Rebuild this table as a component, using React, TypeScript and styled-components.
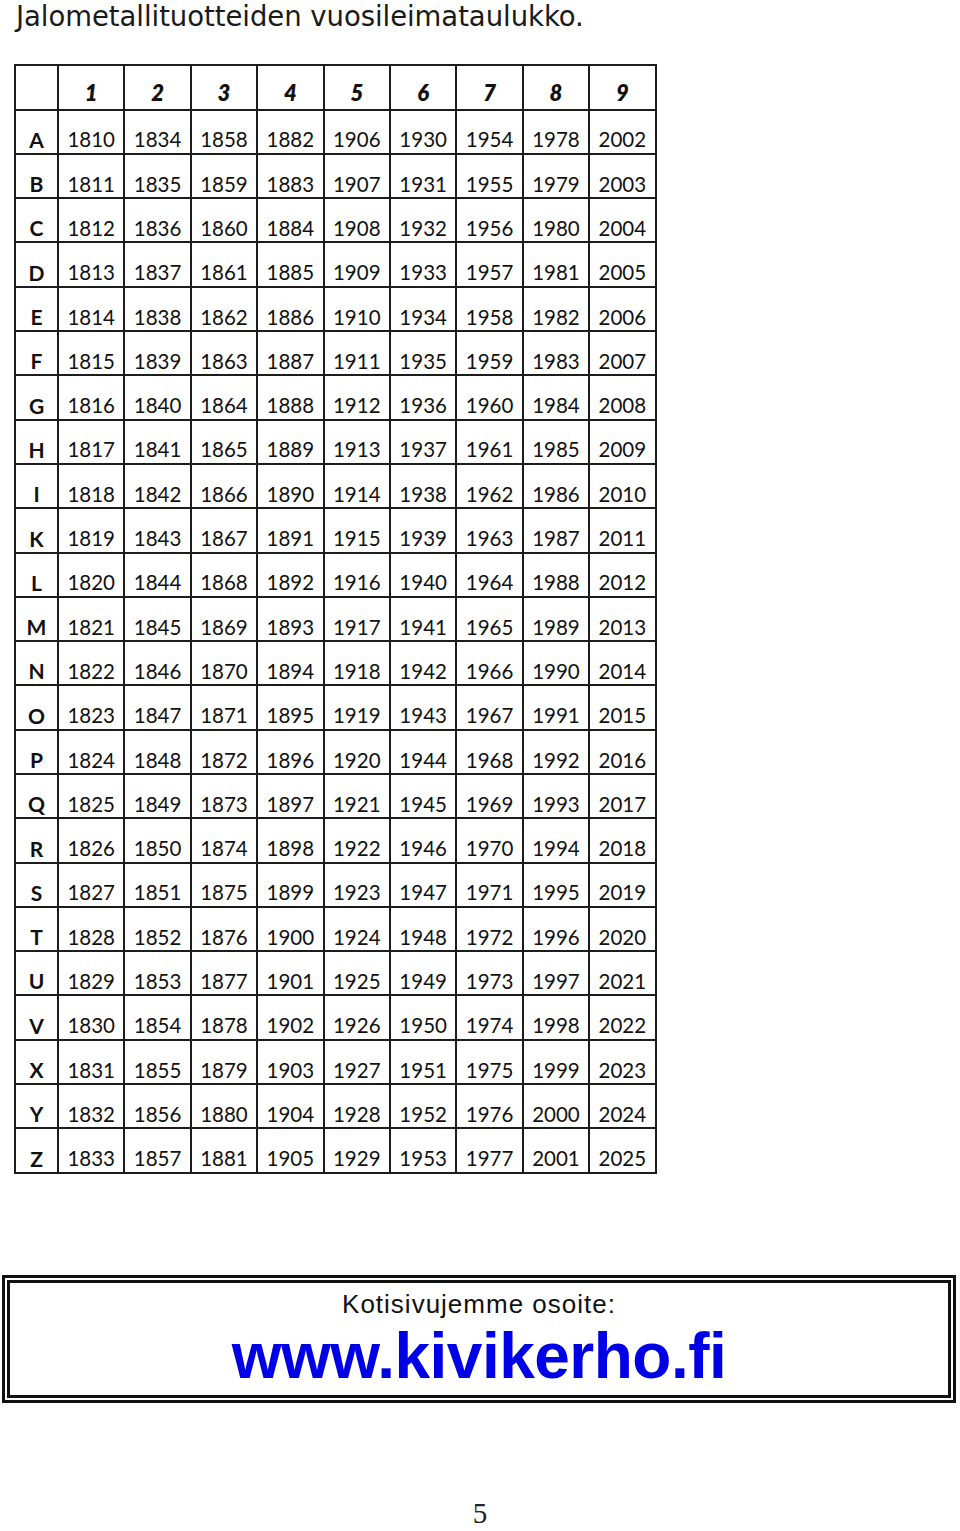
import React from "react";
import styled, { createGlobalStyle } from "styled-components";

const GlobalStyle = createGlobalStyle`
  html, body {
    margin: 0;
    padding: 0;
    background: #ffffff;
  }
  body {
    width: 960px;
    color: #151515;
  }
`;

const Page = styled.div`
  display: flex;
  flex-direction: column;
  width: 960px;
  height: 1531px;
`;

const Title = styled.h1`
  margin: 0;
  padding: 1px 0 0 16px;
  font-family: "DejaVu Sans", Verdana, sans-serif;
  font-weight: normal;
  font-size: 27.5px;
  letter-spacing: -0.05px;
  line-height: 1.1;
  color: #1a1a1a;
`;

const YearTable = styled.table`
  margin: 33px 0 0 14px;
  border-collapse: collapse;
  table-layout: fixed;
  width: 641px;
  border: 2px solid #1c1c1c;
  font-family: Lato, "Open Sans", sans-serif;
  font-size: 20.5px;
  color: #111;
`;

const Row = styled.tr`
  height: 44.3px;
`;

const Cell = styled.td<{ $head?: boolean }>`
  border: 2px solid #1c1c1c;
  padding: 0 0 ${(p) => (p.$head ? "5px" : "3px")};
  text-align: center;
  vertical-align: bottom;
  line-height: 1;
  font-size: ${(p) => (p.$head ? "22px" : "inherit")};
  font-weight: ${(p) => (p.$head ? 800 : 400)};
  font-style: ${(p) => (p.$head ? "italic" : "normal")};
`;

const LetterCol = styled.col`
  width: 43px;
`;

const YearCol = styled.col`
  width: 66.4px;
`;

const LetterCell = styled(Cell)`
  font-size: 21px;
  font-weight: 700;
  font-style: normal;
`;

const Frame = styled.div`
  margin: 101px 0 0 2px;
  width: 954px;
  box-sizing: border-box;
  border: 3px solid #111;
  padding: 2px;
`;

const FrameInner = styled.div`
  box-sizing: border-box;
  height: 118px;
  border: 3px solid #111;
  padding-top: 7px;
  display: flex;
  flex-direction: column;
  align-items: center;
  font-family: "Liberation Sans", Arial, sans-serif;
`;

const Caption = styled.div`
  font-size: 26px;
  letter-spacing: 1px;
  line-height: 1.149;
  color: #111;
`;

const Url = styled.div`
  margin-top: 3px;
  font-size: 64px;
  font-weight: 700;
  line-height: 1.05;
  letter-spacing: -0.5px;
  color: #0000e6;
`;

const PageNumber = styled.div`
  margin-top: 98px;
  text-align: center;
  font-family: "Liberation Serif", "Times New Roman", serif;
  font-size: 29px;
  line-height: 24px;
  color: #222;
`;

const letters = "ABCDEFGHIKLMNOPQRSTUVXYZ".split("");
const columns = [1, 2, 3, 4, 5, 6, 7, 8, 9];

export default function App() {
  return (
    <>
      <GlobalStyle />
      <Page>
        <Title>Jalometallituotteiden vuosileimataulukko.</Title>
        <YearTable>
          <colgroup>
            <LetterCol />
            {columns.map((c) => (
              <YearCol key={c} />
            ))}
          </colgroup>
          <tbody>
            <Row>
              <LetterCell />
              {columns.map((c) => (
                <Cell key={c} $head>
                  {c}
                </Cell>
              ))}
            </Row>
            {letters.map((letter, i) => (
              <Row key={letter}>
                <LetterCell>{letter}</LetterCell>
                {columns.map((c) => (
                  <Cell key={c}>{1810 + i + 24 * (c - 1)}</Cell>
                ))}
              </Row>
            ))}
          </tbody>
        </YearTable>
        <Frame>
          <FrameInner>
            <Caption>Kotisivujemme osoite:</Caption>
            <Url>www.kivikerho.fi</Url>
          </FrameInner>
        </Frame>
        <PageNumber>5</PageNumber>
      </Page>
    </>
  );
}
